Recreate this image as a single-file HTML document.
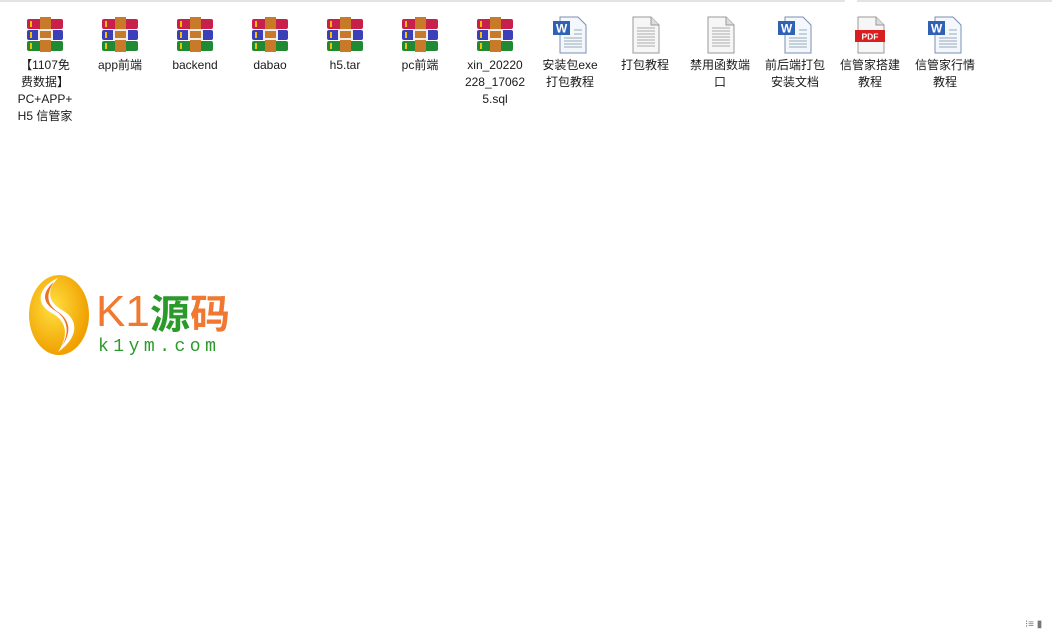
<!DOCTYPE html>
<html><head><meta charset="utf-8"><style>
body{margin:0;width:1052px;height:631px;background:#fff;position:relative;overflow:hidden;font-family:"Liberation Sans","Noto Sans CJK SC",sans-serif;}
.top{position:absolute;top:0;left:0;width:845px;height:2px;background:#e3e3e3}
.top2{position:absolute;top:0;left:857px;width:195px;height:2px;background:#e3e3e3}
.it{position:absolute;top:16px;width:74px;text-align:center;font-size:12px;line-height:17px;color:#1a1a1a}
.it svg{display:block;margin:0 auto 3px;width:40px;height:38px}
</style></head><body>
<div class="top"></div><div class="top2"></div>
<svg width="0" height="0" style="position:absolute"><defs>
<g id="rar">
<rect x="2" y="3" width="36" height="10" rx="2" fill="#c8204a"/>
<rect x="2" y="14" width="36" height="10" rx="2" fill="#3b3fb8"/>
<rect x="2" y="25" width="36" height="10" rx="2" fill="#1f8a33"/>
<rect x="5" y="5" width="2" height="6" fill="#f5c000"/><rect x="5" y="16" width="2" height="6" fill="#f5c000"/><rect x="5" y="27" width="2" height="6" fill="#f5c000"/>
<rect x="15" y="1" width="11" height="35" fill="#c87a28"/>
<rect x="14" y="14" width="13" height="9" fill="none" stroke="#eee" stroke-width="2"/>
</g>
<g id="doc">
<path d="M8 1h18l8 8v28H8z" fill="#f6f6f6" stroke="#999"/>
<path d="M26 1v8h8" fill="#ddd" stroke="#999"/>
<g stroke="#aaa"><path d="M12 12h18M12 15h18M12 18h18M12 21h18M12 24h18M12 27h18M12 30h18"/></g>
</g>
<g id="word">
<path d="M10 1h18l8 8v28H10z" fill="#f4f7fb" stroke="#7a8fb0"/>
<g stroke="#9ab"><path d="M14 22h18M14 25h18M14 28h18M14 31h18M24 14h8M24 18h8"/></g>
<rect x="3" y="5" width="17" height="14" fill="#2f62b5"/>
<text x="11.5" y="16.5" font-size="12" font-weight="bold" fill="#fff" text-anchor="middle" font-family="Liberation Sans">W</text>
</g>
</defs></svg>

<div class="it" style="left:8px"><svg viewBox="0 0 40 38"><use href="#rar"/></svg>【1107免<br>费数据】<br>PC+APP+<br>H5 信管家</div>
<div class="it" style="left:83px"><svg viewBox="0 0 40 38"><use href="#rar"/></svg>app前端</div>
<div class="it" style="left:158px"><svg viewBox="0 0 40 38"><use href="#rar"/></svg>backend</div>
<div class="it" style="left:233px"><svg viewBox="0 0 40 38"><use href="#rar"/></svg>dabao</div>
<div class="it" style="left:308px"><svg viewBox="0 0 40 38"><use href="#rar"/></svg>h5.tar</div>
<div class="it" style="left:383px"><svg viewBox="0 0 40 38"><use href="#rar"/></svg>pc前端</div>
<div class="it" style="left:458px"><svg viewBox="0 0 40 38"><use href="#rar"/></svg>xin_20220<br>228_17062<br>5.sql</div>
<div class="it" style="left:533px"><svg viewBox="0 0 40 38"><use href="#word"/></svg>安装包exe<br>打包教程</div>
<div class="it" style="left:608px"><svg viewBox="0 0 40 38"><use href="#doc"/></svg>打包教程</div>
<div class="it" style="left:683px"><svg viewBox="0 0 40 38"><use href="#doc"/></svg>禁用函数端<br>口</div>
<div class="it" style="left:758px"><svg viewBox="0 0 40 38"><use href="#word"/></svg>前后端打包<br>安装文档</div>
<div class="it" style="left:833px"><svg viewBox="0 0 40 38"><path d="M8 1h18l8 8v28H8z" fill="#f6f6f6" stroke="#999"/><path d="M26 1v8h8" fill="#ddd" stroke="#999"/><rect x="5" y="14" width="30" height="12" fill="#d81e1e"/><text x="20" y="23.5" font-size="8.5" font-weight="bold" fill="#fff" text-anchor="middle" font-family="Liberation Sans">PDF</text></svg>信管家搭建<br>教程</div>
<div class="it" style="left:908px"><svg viewBox="0 0 40 38"><use href="#word"/></svg>信管家行情<br>教程</div>

<svg style="position:absolute;left:28px;top:272px" width="210" height="86" viewBox="0 0 210 86">
<defs><radialGradient id="g" cx="40%" cy="40%" r="60%"><stop offset="0" stop-color="#ffe040"/><stop offset="1" stop-color="#f0a000"/></radialGradient></defs>
<ellipse cx="31" cy="43" rx="30" ry="40" fill="url(#g)"/>
<path d="M30 6C12 14 6 30 22 40C38 48 42 62 30 80C50 66 52 48 34 38C20 30 18 18 30 6z" fill="#fff"/>
<path d="M26 10C14 20 14 30 26 38C40 46 42 60 34 74C44 60 42 48 30 40C18 32 18 22 26 10z" fill="#f07020"/>
<text x="68" y="54" font-size="44" fill="#f07830" font-family="Liberation Sans">K1</text>
<text x="122" y="56" font-size="40" font-weight="bold" fill="#2a9a2a" font-family="Noto Sans CJK SC,sans-serif">源</text>
<text x="162" y="56" font-size="40" font-weight="bold" fill="#f07830" font-family="Noto Sans CJK SC,sans-serif">码</text>
<text x="70" y="79" font-size="18" fill="#2a9a2a" letter-spacing="4.5" font-family="Liberation Mono">k1ym.com</text>
</svg>

<div style="position:absolute;left:1025px;top:620px;font-size:10px;color:#777;line-height:10px">⁝≡ ▮</div>
</body></html>
